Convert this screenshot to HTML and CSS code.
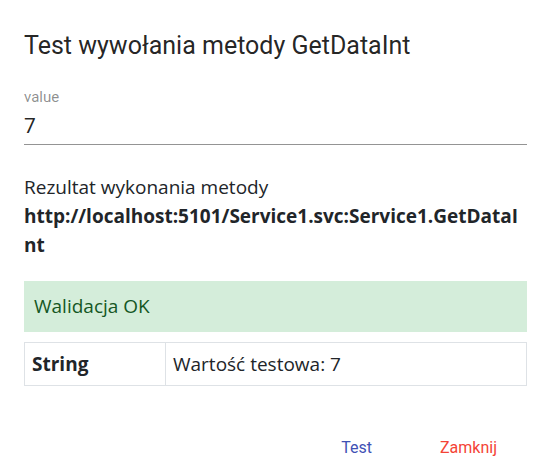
FILE: index.html
```html
<!DOCTYPE html>
<html lang="pl">

<head>
    <meta charset="UTF-8">
    <meta name="viewport" content="width=device-width, initial-scale=1.0">
    <title>Test wywołania metody</title>
    <link rel="stylesheet" href="styles.css">
</head>

<body>
    <div class="dialog">
        <h2 class="dialog-title">Test wywołania metody GetDataInt</h2>

        <div class="field">
            <label class="field-label" for="value">value</label>
            <input class="field-input" id="value" type="text" value="7">
        </div>

        <div class="result">
            <div class="result-caption">Rezultat wykonania metody</div>
            <div class="result-url">http://localhost:5101/Service1.svc:Service1.GetDataInt</div>
        </div>

        <div class="alert">Walidacja OK</div>

        <table class="result-table">
            <tr>
                <th>String</th>
                <td>Wartość testowa: 7</td>
            </tr>
        </table>

        <div class="actions">
            <button class="btn btn-test">Test</button>
            <button class="btn btn-close">Zamknij</button>
        </div>
    </div>
</body>

</html>
```

FILE: styles.css
```css
body {
    margin: 0;
    background: #fff;
    font-family: "Open Sans", "Noto Sans", sans-serif;
    color: #212529;
}

.dialog {
    width: 503px;
    padding: 30px 0 0 24px;
}

.dialog-title {
    margin: 0;
    font-family: Roboto, sans-serif;
    font-weight: 400;
    font-size: 25px;
    line-height: 32px;
    color: rgba(0, 0, 0, 0.87);
}

/* pole tekstowe w stylu material */
.field {
    margin-top: 26px;
    display: flex;
    flex-direction: column;
}

.field-label {
    font-family: Roboto, sans-serif;
    font-size: 15px;
    line-height: 18px;
    color: rgba(0, 0, 0, 0.45);
}

.field-input {
    border: none;
    border-bottom: 1px solid #949494;
    padding: 5px 0 5px;
    margin-top: 2px;
    font-family: Roboto, sans-serif;
    font-size: 21px;
    line-height: 26px;
    color: rgba(0, 0, 0, 0.87);
    outline: none;
    background: transparent;
}

.result {
    margin-top: 28px;
    font-size: 19px;
    line-height: 29px;
}

.result-url {
    max-width: 500px;
    font-weight: 700;
    word-break: break-all;
}

.alert {
    margin-top: 21px;
    padding: 12px 10px;
    background: #d4edda;
    color: #155724;
    font-size: 19px;
    line-height: 27px;
}

.result-table {
    width: 100%;
    margin-top: 10px;
    border-collapse: collapse;
    font-size: 19px;
    line-height: 27px;
}

.result-table th,
.result-table td {
    border: 1px solid #dee2e6;
    padding: 8px 7px 7px;
    text-align: left;
}

.result-table th {
    width: 126px;
}

.actions {
    display: flex;
    justify-content: flex-end;
    gap: 68px;
    margin-top: 52px;
    padding-right: 30px;
}

.btn {
    border: none;
    background: none;
    padding: 0;
    font-family: Roboto, sans-serif;
    font-size: 16px;
    line-height: 20px;
    cursor: pointer;
}

.btn-test {
    color: #3f51b5;
}

.btn-close {
    color: #f44336;
}
```
